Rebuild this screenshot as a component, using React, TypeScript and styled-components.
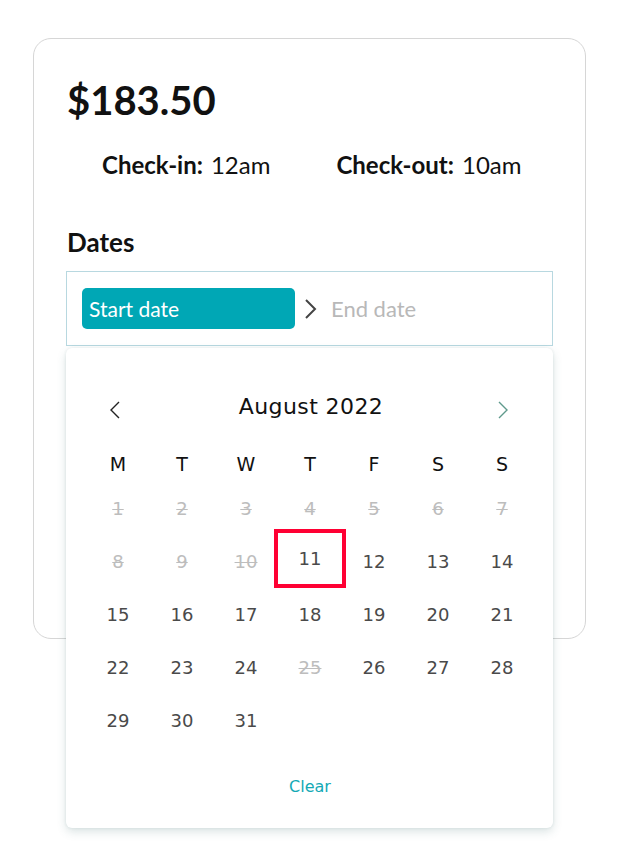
import React from "react";
import styled, { createGlobalStyle, css } from "styled-components";

const Global = createGlobalStyle`
  html, body { margin: 0; padding: 0; background: #ffffff; }
  * { box-sizing: border-box; }
`;

const HEAD = `"Lato", "Open Sans", sans-serif`;
const CAL = `"DejaVu Sans", "Noto Sans", sans-serif`;

const Page = styled.div`
  padding-top: 38px;
  width: 621px;
  height: 858px;
`;

const Card = styled.div`
  position: relative;
  width: 553px;
  height: 601px;
  margin-left: 33px;
  border: 1px solid #d6d6d6;
  border-radius: 18px;
  padding: 37px 32px 0 32px;
  font-family: ${HEAD};
  color: #111;
`;

const Price = styled.div`
  font-size: 40px;
  font-weight: 700;
  line-height: 48px;
  padding-left: 1px;
`;

const TimesRow = styled.div`
  display: flex;
  gap: 66px;
  padding-left: 36px;
  margin-top: 26px;
  font-size: 24px;
  line-height: 30px;
`;

const TimeItem = styled.div`
  white-space: nowrap;
  b { font-weight: 700; margin-right: 8px; }
`;

const Label = styled.div`
  margin-top: 47px;
  font-size: 26px;
  font-weight: 700;
  line-height: 30px;
  padding-left: 1px;
`;

const InputWrap = styled.div`
  position: relative;
  margin-top: 14px;
`;

const Input = styled.div`
  display: flex;
  align-items: center;
  height: 75px;
  border: 1px solid #b8d8e0;
  padding: 0 15px;
`;

const DateBox = styled.div<{ $active?: boolean }>`
  height: 41px;
  display: flex;
  align-items: center;
  font-size: 21px;
  padding: 0 7px;
  ${(p) =>
    p.$active
      ? css`
          width: 213px;
          background: #00a7b5;
          color: #fff;
          border-radius: 5px;
        `
      : css`
          color: #b8b8b8;
          font-size: 22px;
          padding-left: 8px;
        `}
`;

const Arrow = styled.svg`
  margin: 0 6px 0 8px;
  flex: none;
`;

const Popup = styled.div`
  position: absolute;
  top: 77px;
  left: 0;
  width: 487px;
  height: 480px;
  background: #fff;
  border-radius: 6px;
  box-shadow: 0 4px 10px rgba(60, 110, 110, 0.18), 0 0 3px rgba(60, 110, 110, 0.12);
  padding: 40px 19px 0 20px;
  font-family: ${CAL};
  z-index: 2;
`;

const Header = styled.div`
  display: flex;
  align-items: center;
  justify-content: space-between;
  height: 36px;
  padding: 0 26px 0 24px;
`;

const NavBtn = styled.button`
  background: none;
  border: 0;
  padding: 0;
  margin-top: 8px;
  display: flex;
`;

const Title = styled.div`
  font-size: 22px;
  font-weight: 500;
  color: #111;
  letter-spacing: 0.4px;
  margin-left: 4px;
`;

const Grid = styled.div`
  display: grid;
  grid-template-columns: repeat(7, 64px);
`;

const WeekGrid = styled(Grid)`
  margin-top: 22px;
  height: 36px;
`;

const WeekDay = styled.div`
  display: flex;
  align-items: center;
  justify-content: center;
  font-size: 19px;
  color: #111;
`;

const Day = styled.div<{ $disabled?: boolean; $today?: boolean }>`
  height: 53px;
  display: flex;
  align-items: center;
  justify-content: center;
  font-size: 18px;
  font-weight: 500;
  color: ${(p) => (p.$disabled ? "#bdbdbd" : "#4a4a4a")};
  text-decoration: ${(p) => (p.$disabled ? "line-through" : "none")};
  text-decoration-thickness: 1px;
  ${(p) =>
    p.$today &&
    css`
      outline: 4px solid #ff0033;
      outline-offset: 0px;
      margin: -2px 0 4px 0;
      height: 51px;
    `}
`;

const Clear = styled.div`
  margin-top: 30px;
  text-align: center;
  font-size: 16px;
  line-height: 20px;
  color: #14a9b5;
`;

const disabled = new Set([1, 2, 3, 4, 5, 6, 7, 8, 9, 10, 25]);

export default function App() {
  const days = Array.from({ length: 31 }, (_, i) => i + 1);
  return (
    <Page>
      <Global />
      <Card>
        <Price>$183.50</Price>
        <TimesRow>
          <TimeItem>
            <b>Check-in:</b>12am
          </TimeItem>
          <TimeItem>
            <b>Check-out:</b>10am
          </TimeItem>
        </TimesRow>
        <Label>Dates</Label>
        <InputWrap>
          <Input>
            <DateBox $active>Start date</DateBox>
            <Arrow width="14" height="22" viewBox="0 0 14 22">
              <path d="M3 2 L12 11 L3 20" fill="none" stroke="#444" strokeWidth="2" />
            </Arrow>
            <DateBox>End date</DateBox>
          </Input>
          <Popup>
            <Header>
              <NavBtn aria-label="Previous month">
                <svg width="10" height="18" viewBox="0 0 10 18">
                  <path d="M9 1 L1 9 L9 17" fill="none" stroke="#222" strokeWidth="1.4" />
                </svg>
              </NavBtn>
              <Title>August 2022</Title>
              <NavBtn aria-label="Next month">
                <svg width="10" height="18" viewBox="0 0 10 18">
                  <path d="M1 1 L9 9 L1 17" fill="none" stroke="#5f9a8c" strokeWidth="1.4" />
                </svg>
              </NavBtn>
            </Header>
            <WeekGrid>
              {["M", "T", "W", "T", "F", "S", "S"].map((d, i) => (
                <WeekDay key={i}>{d}</WeekDay>
              ))}
            </WeekGrid>
            <Grid>
              {days.map((d) => (
                <Day key={d} $disabled={disabled.has(d)} $today={d === 11}>
                  {d}
                </Day>
              ))}
            </Grid>
            <Clear>Clear</Clear>
          </Popup>
        </InputWrap>
      </Card>
    </Page>
  );
}
